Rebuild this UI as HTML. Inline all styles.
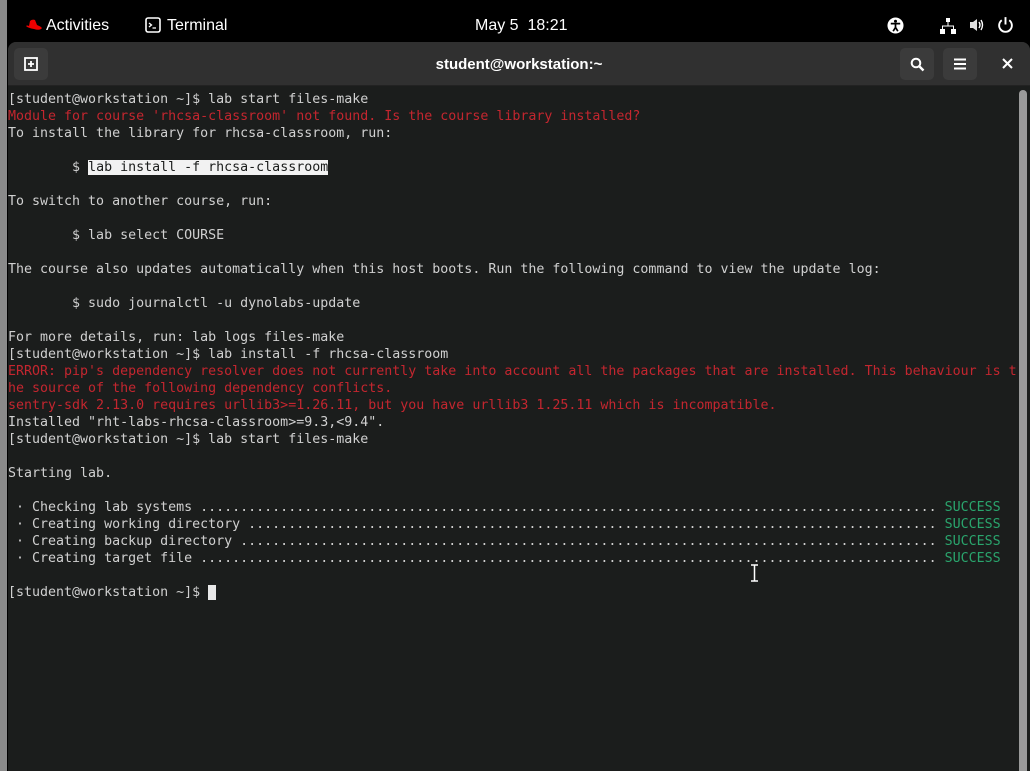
<!DOCTYPE html>
<html><head><meta charset="utf-8"><style>
*{margin:0;padding:0;box-sizing:border-box}
body{width:1030px;height:771px;background:#000;position:relative;overflow:hidden;font-family:"Liberation Sans","DejaVu Sans",sans-serif}
#strip{position:absolute;left:0;top:0;width:7px;height:771px;background:#8a8a8a}
#top{position:absolute;left:7px;top:0;right:0;height:48px;background:#000;color:#fff;font-size:16px}
#top span{position:absolute;top:17px}
#win{position:absolute;left:8px;top:42px;right:0;bottom:0;background:#1b1d1c;border-radius:8px 8px 0 0;overflow:hidden}
#tb{height:44px;background:#303030;position:relative;border-bottom:1px solid #222}
.btn{position:absolute;top:6px;width:34px;height:32px;background:#3b3b3b;border-radius:5px}
#title{position:absolute;left:0;right:0;top:14px;text-align:center;color:#fff;font-weight:bold;font-size:15px}
pre{position:absolute;left:0;top:49px;font-family:"DejaVu Sans Mono","Liberation Mono",monospace;font-size:13.3px;line-height:17px;color:#d0d0d0}
.r{color:#c4262f}.g{color:#2aa56d}.hl{background:#f2f2f2;color:#1b1d1c}
.cur{background:#e8e8e8}
#sb{position:absolute;right:0;top:45px;width:14px;bottom:0;background:#1b1d1c}
#thumb{position:absolute;right:3px;top:3px;width:8px;bottom:0;background:#9a9a9a;border-radius:4px 4px 0 0}
</style></head><body>
<div id="strip"></div>
<div id="top">
<svg style="position:absolute;left:18px;top:19px" width="18" height="14" viewBox="0 0 18 14"><path d="M5 2 Q7 0 10 1 L12 6 Q15 7 17 9 Q15 12 9 10 Q3 9 1 7 Q2 6 4 7 Z" fill="#e00"/></svg>
<span style="left:39px">Activities</span>
<svg style="position:absolute;left:138px;top:17px" width="16" height="16" viewBox="0 0 16 16"><rect x="1" y="1" width="14" height="14" rx="2" fill="none" stroke="#fff" stroke-width="1.6"/><path d="M4 6 L6.5 8 L4 10 M7.5 11 H11" stroke="#fff" stroke-width="1.3" fill="none"/></svg>
<span style="left:160px">Terminal</span>
<span style="left:468px">May 5&nbsp; 18:21</span>
<svg style="position:absolute;left:880px;top:17px" width="17" height="17" viewBox="0 0 18 18"><circle cx="9" cy="9" r="8.5" fill="#fff"/><circle cx="9" cy="4.5" r="1.6" fill="#000"/><path d="M4 7 H14 M9 7 V11 L6.5 15 M9 11 L11.5 15" stroke="#000" stroke-width="1.8" fill="none"/></svg>
<svg style="position:absolute;left:933px;top:18px" width="16" height="16" viewBox="0 0 16 16" fill="#fff"><rect x="6" y="0" width="4" height="4"/><rect x="0" y="11" width="5" height="5"/><rect x="11" y="11" width="5" height="5"/><path d="M8 4 V8 M2.5 11 V8 H13.5 V11" stroke="#fff" fill="none"/></svg>
<svg style="position:absolute;left:962px;top:17px" width="16" height="16" viewBox="0 0 16 16"><path d="M1 5 H4 L8 2 V14 L4 11 H1Z" fill="#ddd"/><path d="M10 5 Q12 8 10 11 M12 3 Q15 8 12 13" stroke="#fff" stroke-width="1.4" fill="none"/></svg>
<svg style="position:absolute;left:990px;top:16px" width="17" height="17" viewBox="0 0 16 16"><path d="M4.5 4 A6 6 0 1 0 11.5 4 M8 1 V8" stroke="#fff" stroke-width="1.8" fill="none"/></svg>
</div>
<div id="win">
<div id="tb">
<div class="btn" style="left:6px"><svg style="position:absolute;left:10px;top:9px" width="14" height="14" viewBox="0 0 14 14"><rect x="1" y="1" width="12" height="12" fill="none" stroke="#fff" stroke-width="1.8"/><path d="M7 4 V10 M4 7 H10" stroke="#fff" stroke-width="1.8"/></svg></div>
<div id="title">student@workstation:~</div>
<div class="btn" style="left:892px"><svg style="position:absolute;left:10px;top:9px" width="15" height="15" viewBox="0 0 15 15"><circle cx="6" cy="6" r="4.3" fill="none" stroke="#fff" stroke-width="2"/><path d="M9 9 L13.5 13.5" stroke="#fff" stroke-width="2.4"/></svg></div>
<div class="btn" style="left:935px"><svg style="position:absolute;left:10px;top:10px" width="14" height="12" viewBox="0 0 14 12"><path d="M1 1.5H13M1 6H13M1 10.5H13" stroke="#fff" stroke-width="2"/></svg></div>
<svg style="position:absolute;left:994px;top:16px" width="11" height="11" viewBox="0 0 11 11"><path d="M1 1L10 10M10 1L1 10" stroke="#fff" stroke-width="2"/></svg>
</div>
<pre>[student@workstation ~]$ lab start files-make
<span class="r">Module for course 'rhcsa-classroom' not found. Is the course library installed?</span>
To install the library for rhcsa-classroom, run:

        $ <span class="hl">lab install -f rhcsa-classroom</span>

To switch to another course, run:

        $ lab select COURSE

The course also updates automatically when this host boots. Run the following command to view the update log:

        $ sudo journalctl -u dynolabs-update

For more details, run: lab logs files-make
[student@workstation ~]$ lab install -f rhcsa-classroom
<span class="r">ERROR: pip's dependency resolver does not currently take into account all the packages that are installed. This behaviour is t
he source of the following dependency conflicts.
sentry-sdk 2.13.0 requires urllib3&gt;=1.26.11, but you have urllib3 1.25.11 which is incompatible.</span>
Installed "rht-labs-rhcsa-classroom&gt;=9.3,&lt;9.4".
[student@workstation ~]$ lab start files-make

Starting lab.

 · Checking lab systems ............................................................................................ <span class="g">SUCCESS</span>
 · Creating working directory ...................................................................................... <span class="g">SUCCESS</span>
 · Creating backup directory ....................................................................................... <span class="g">SUCCESS</span>
 · Creating target file ............................................................................................ <span class="g">SUCCESS</span>

[student@workstation ~]$ <span class="cur"> </span></pre>
<div id="sb"><div id="thumb"></div></div>
</div>
<svg style="position:absolute;left:750px;top:564px" width="9" height="18" viewBox="0 0 9 18"><path d="M1 1H8M4.5 1V17M1 17H8" stroke="#fff" stroke-width="1.5"/></svg>
</body></html>
